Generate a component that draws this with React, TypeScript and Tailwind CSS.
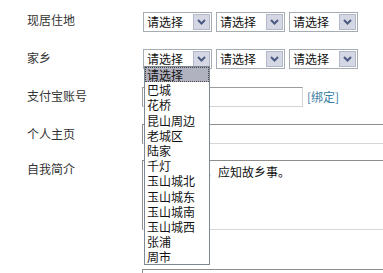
const areas = ["请选择", "巴城", "花桥", "昆山周边", "老城区", "陆家", "千灯", "玉山城北", "玉山城东", "玉山城南", "玉山城西", "张浦", "周市"]

function Arrow() {
	return (
		<div className="ml-auto mr-[1px] w-[17px] h-[16px] bg-[#d5d8e4] border border-[#b3b8c8] flex items-center justify-center">
			<svg width="9" height="6" viewBox="0 0 9 6">
				<path d="M1 1 L4.5 4.5 L8 1" stroke="#4a5a80" strokeWidth="2" fill="none" />
			</svg>
		</div>
	)
}

function Select({ children }: { children?: React.ReactNode }) {
	return (
		<div className="relative w-[69px] h-[20px] border border-[#a5acb2] bg-white flex items-center">
			<span className="pl-[3px] leading-[16px] text-[#111]">请选择</span>
			<Arrow />
			{children}
		</div>
	)
}

function Label({ text, lh }: { text: string; lh: string }) {
	return <div className={"w-[142px] shrink-0 pl-[27px] text-[#333] " + lh}>{text}</div>
}

export default function App() {
	return (
		<div className="w-[383px] h-[273px] overflow-hidden bg-white font-['Noto_Sans_CJK_SC',sans-serif] text-[12px]">

			<div className="flex items-start mt-[12px] h-[20px]">
				<Label text="现居住地" lh="leading-[16px]" />
				<div className="flex gap-[4px] ml-[1px]">
					<Select />
					<Select />
					<Select />
				</div>
			</div>

			<div className="relative z-10 flex items-start mt-[17px] h-[20px]">
				<Label text="家乡" lh="leading-[18px]" />
				<div className="flex gap-[4px] ml-[1px]">
					<Select>
						<div className="absolute left-[0px] top-[16px] w-[66px] border border-[#7d8a96] bg-white text-[12px] text-[#111]">
							{areas.map((a, i) => (
								<div key={a}
									 className={i === 0
										 ? "h-[15.2px] leading-[13px] pl-[1px] bg-[#b1b2bf] border border-dotted border-[#444]"
										 : "h-[15.2px] leading-[15px] pl-[2px]"}>
									{a}
								</div>
							))}
						</div>
					</Select>
					<Select />
					<Select />
				</div>
			</div>

			<div className="flex items-start mt-[18px] h-[20px]">
				<Label text="支付宝账号" lh="leading-[18px]" />
				<div className="flex items-center">
					<div className="w-[161px] h-[20px] border border-[#d3d3d3] border-t-[#9c9c9c] border-l-[#9c9c9c]" />
					<span className="ml-[4px] leading-[16px] text-[#3b7ea3]">[绑定]</span>
				</div>
			</div>

			<div className="flex items-start mt-[17px] h-[20px]">
				<Label text="个人主页" lh="leading-[19px]" />
				<div className="w-[260px] shrink-0 h-[20px] border border-[#d6d6d6] border-t-[#8e8e8e] border-l-[#8e8e8e]" />
			</div>

			<div className="flex items-start mt-[16px] h-[70px]">
				<Label text="自我简介" lh="leading-[18px]" />
				<div className="w-[260px] shrink-0 h-[70px] border border-[#d8d8d8] border-t-[#8e8e8e] border-l-[#8e8e8e] pl-[3px] pt-[4px] leading-[14px] text-[#111]">
					君自故乡来，应知故乡事。
				</div>
			</div>

			<div className="flex items-start mt-[39px] h-[20px]">
				<div className="w-[142px] shrink-0" />
				<div className="w-[260px] shrink-0 h-[20px] border border-[#d6d6d6] border-t-[#8e8e8e] border-l-[#8e8e8e]" />
			</div>

		</div>
	)
}
